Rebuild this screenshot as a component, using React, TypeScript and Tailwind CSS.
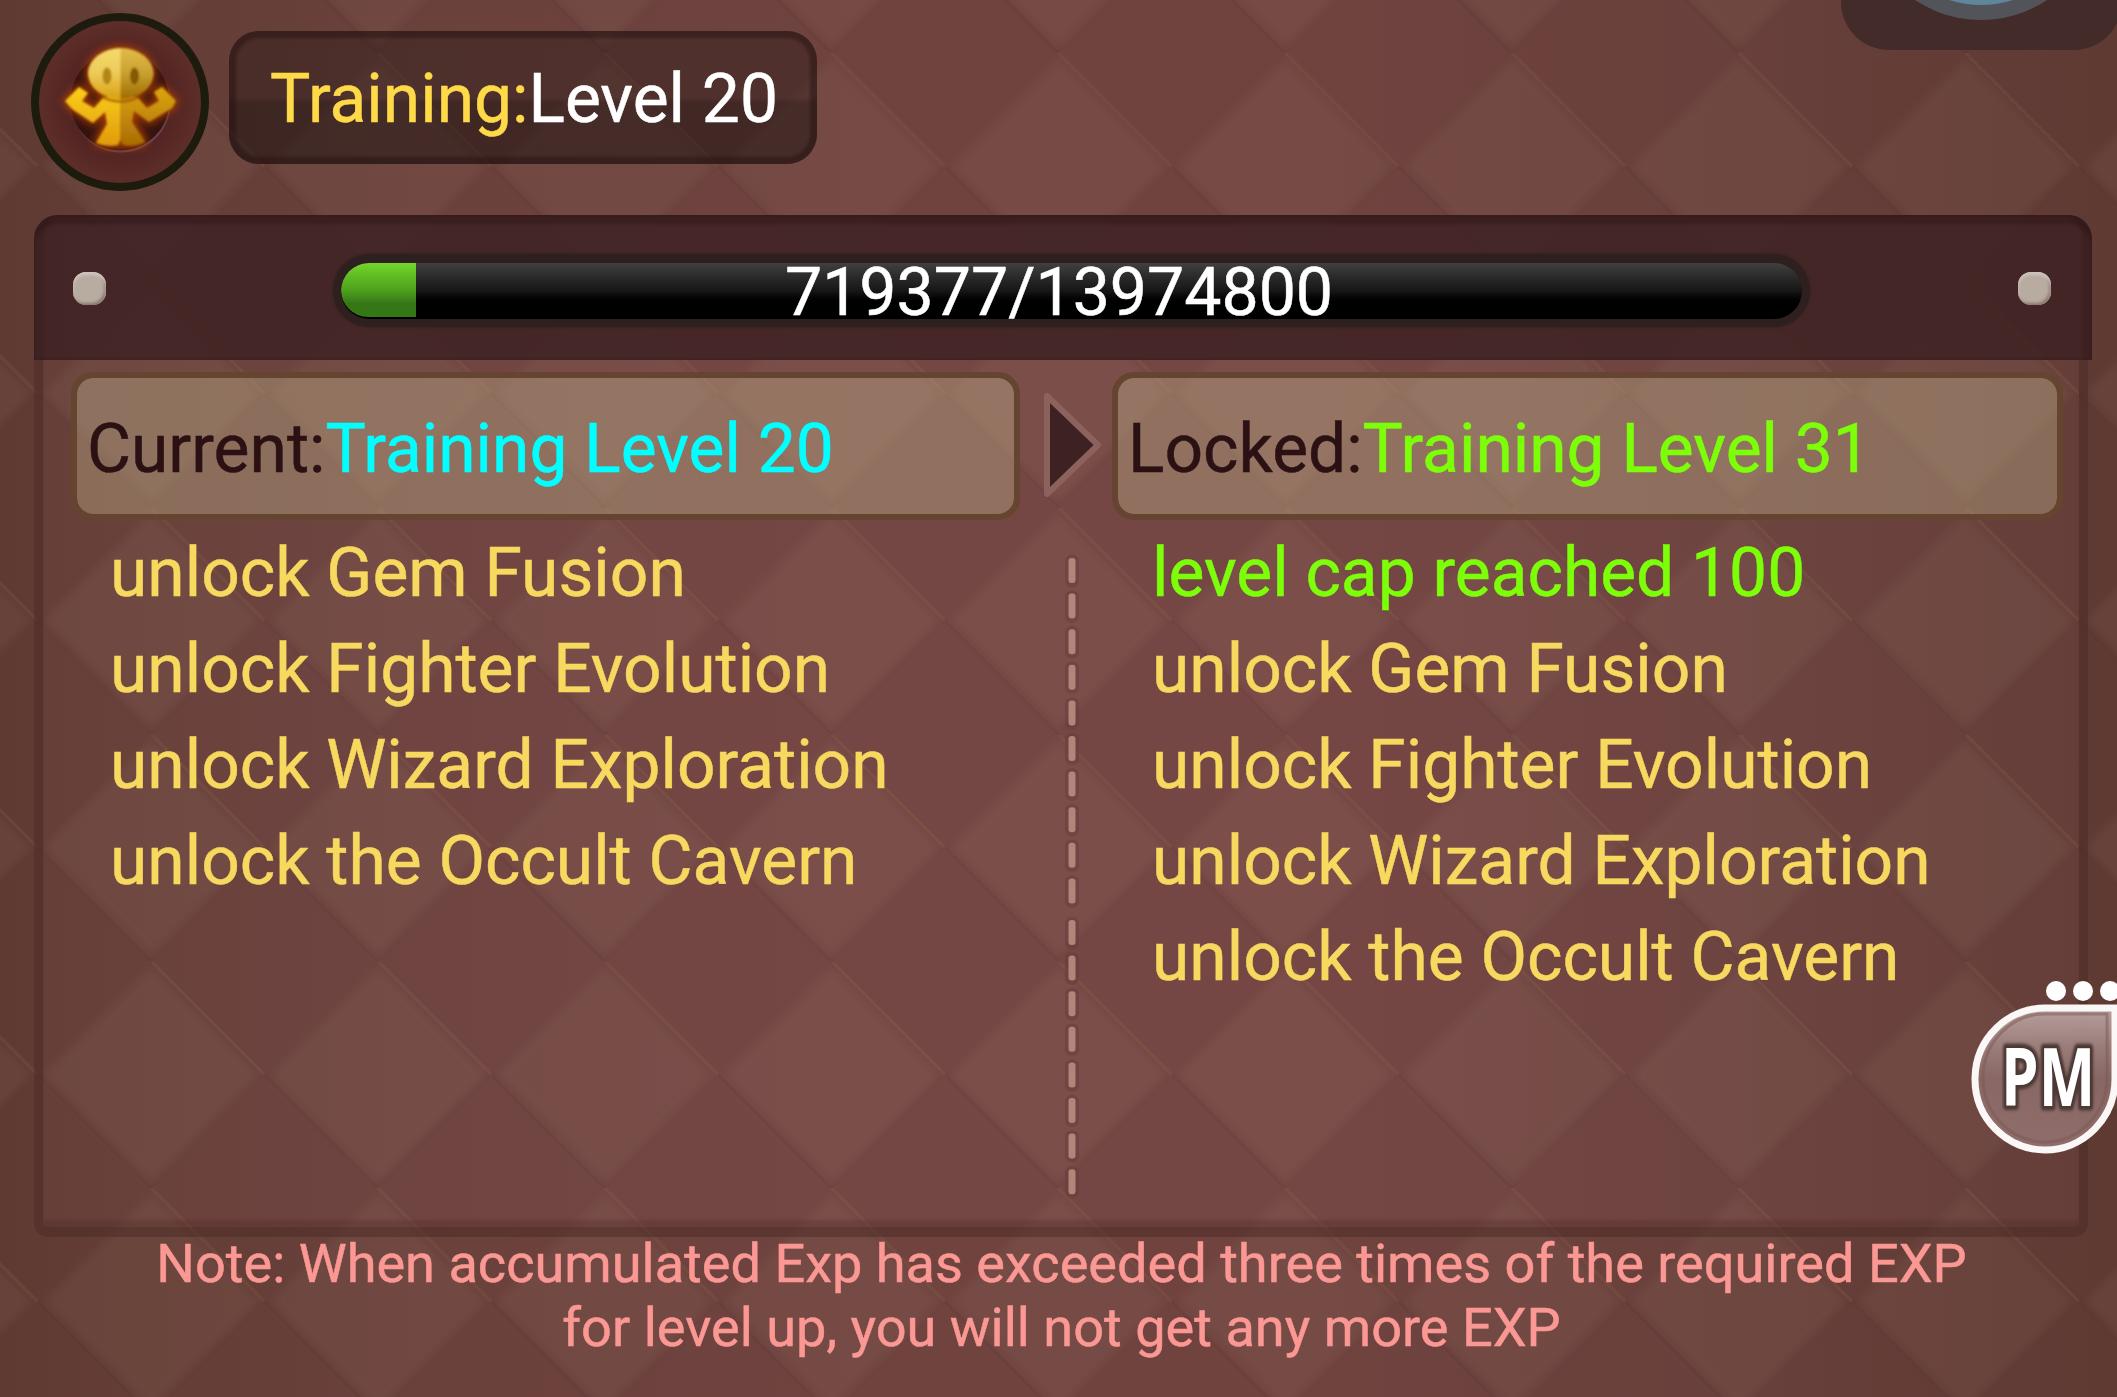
import React from 'react'

const CURRENT_UNLOCKS = [
  'unlock Gem Fusion',
  'unlock Fighter Evolution',
  'unlock Wizard Exploration',
  'unlock the Occult Cavern',
]

const exp = { value: 719377, max: 13974800 }

function Backdrop() {
  return (
    <svg className="absolute inset-0" width="2117" height="1397" viewBox="0 0 2117 1397">
      <defs>
        <linearGradient id="base" x1="0" x2="1" y1="0" y2="0">
          <stop offset="0" stopColor="#5f3a33" />
          <stop offset="0.06" stopColor="#633d36" />
          <stop offset="0.2" stopColor="#6b413c" />
          <stop offset="0.42" stopColor="#70433f" />
          <stop offset="0.62" stopColor="#70433f" />
          <stop offset="0.82" stopColor="#69403b" />
          <stop offset="0.95" stopColor="#613b35" />
          <stop offset="1" stopColor="#5f3a33" />
        </linearGradient>
        <filter id="soft" x="-10%" y="-10%" width="120%" height="120%">
          <feGaussianBlur stdDeviation="4" />
        </filter>
        <pattern id="argyle" patternUnits="userSpaceOnUse" x="37.7" y="53" width="226.8" height="227">
          <path d="M113.4 7 L220 113.5 L113.4 220 L7 113.5 Z" fill="#a88a78" fillOpacity="0.1" filter="url(#soft)" />
          <path d="M113.4 0 L226.8 113.5" stroke="#8a6444" strokeOpacity="0.22" strokeWidth="3" />
          <path d="M226.8 113.5 L113.4 227" stroke="#4a2b28" strokeOpacity="0.05" strokeWidth="3" />
          <path d="M0 113.5 L113.4 227" stroke="#4a2b28" strokeOpacity="0.14" strokeWidth="3" />
        </pattern>
      </defs>
      <rect width="2117" height="1397" fill="url(#base)" />
      <rect width="2117" height="1397" fill="url(#argyle)" />
    </svg>
  )
}

function FighterBadge() {
  return (
    <svg className="shrink-0" width="178" height="178" viewBox="31 13 178 178">
      <defs>
        <radialGradient id="badge">
          <stop offset="0.5" stopColor="#502220" />
          <stop offset="1" stopColor="#5e2f2a" />
        </radialGradient>
        <linearGradient id="headL" x1="0" x2="0" y1="0" y2="1">
          <stop offset="0" stopColor="#f4da6c" />
          <stop offset="0.5" stopColor="#eccb58" />
          <stop offset="1" stopColor="#d9a010" />
        </linearGradient>
        <linearGradient id="headR" x1="0" x2="0" y1="0" y2="1">
          <stop offset="0" stopColor="#e2bc48" />
          <stop offset="0.5" stopColor="#c8a030" />
          <stop offset="1" stopColor="#a06c00" />
        </linearGradient>
        <linearGradient id="bodyL" x1="0" x2="0" y1="0" y2="1">
          <stop offset="0" stopColor="#fbd015" />
          <stop offset="1" stopColor="#e09a10" />
        </linearGradient>
        <linearGradient id="bodyR" x1="0" x2="0" y1="0" y2="1">
          <stop offset="0" stopColor="#dca70e" />
          <stop offset="1" stopColor="#a96c05" />
        </linearGradient>
        <filter id="glow" x="-30%" y="-30%" width="160%" height="160%">
          <feGaussianBlur stdDeviation="4" />
        </filter>
        <filter id="edge">
          <feGaussianBlur stdDeviation="0.8" />
        </filter>
      </defs>
      <circle cx="120" cy="102" r="85" fill="url(#badge)" stroke="#1d1b0d" strokeWidth="8" />
      <circle cx="121" cy="103" r="49.500" fill="#67424f" />
      <circle cx="120" cy="101" r="49.500" fill="#35130f" />
      <g fill="#b84a06" stroke="#b84303" strokeWidth="4" filter="url(#glow)" opacity="0.9">
        <ellipse cx="120.500" cy="73.500" rx="32.500" ry="25.500" />
        <path d="M79 87L65 101L72 109L93 123L104 113L108 118L96 143Q108 148 120 145Q134 148 145 142L132 118L137 113L149 122L172 108L176 101L162 87L154 92L159 101L147 108L137 97L104 97L94 108L82 101L88 93Z" />
      </g>
      <g filter="url(#edge)">
        <path d="M79 87L65 101L72 109L93 123L105 112L107 124L96 143Q106 147 118 145L120 140L120 97L104 97L94 108L82 101L88 93Z" fill="url(#bodyL)" />
        <path d="M162 87L176 101L172 108L149 122L134 111L132 122L145 142Q134 147 124 145L120 140L120 97L137 97L147 108L159 101L154 92Z" fill="url(#bodyR)" />
        <path d="M103 96Q121 104 138 96L138 99Q121 107 103 99Z" fill="#a24c05" opacity="0.7" />
        <path d="M121 48A33 25.500 0 0 0 121 99Z" fill="url(#headL)" />
        <path d="M120.500 48A33 25.500 0 0 1 120.500 99Z" fill="url(#headR)" />
        <ellipse cx="107" cy="76" rx="4.500" ry="8.500" fill="#b38516" />
        <ellipse cx="134.500" cy="76" rx="4.500" ry="8.500" fill="#845a00" />
      </g>
    </svg>
  )
}

function Stud() {
  return <div className="h-[33px] w-[33px] rounded-[13px] bg-[#b8aca1] shadow-[inset_0_3px_3px_#d0c3c0,inset_-2px_-2px_3px_#8b7672]" />
}

function ExpBar() {
  return (
    <div className="relative mt-[5px] ml-[227px] mr-[208px] flex h-[73px] w-[1477px] items-center rounded-full bg-[#2e201e] px-[8px] shadow-[0_0_3px_#2e201e]">
      <div className="h-[56px] w-full overflow-hidden rounded-full bg-gradient-to-b from-[#404040] via-[#151615] to-black to-80%">
        <div
          className="h-[54px] rounded-l-full bg-gradient-to-b from-[#73d62a] via-[#4ea11d] to-[#357717] to-75%"
          style={{ width: `${(exp.value / exp.max) * 100}%` }}
        />
      </div>
      <span className="absolute inset-x-0 pt-[4px] pr-[25px] text-center text-[66.2px] leading-[73px] text-white">
        {exp.value}/{exp.max}
      </span>
    </div>
  )
}

interface LevelTagProps {
  label: string
  level: string
  color: string
}

function LevelTag({ label, level, color }: LevelTagProps) {
  return (
    <div className="h-[148px] rounded-[22px] border-[6px] border-[#65452f] bg-[#beae8a]/40 bg-clip-padding pl-[10px] leading-[142px] whitespace-nowrap">
      <span className="text-[#2b1113]">{label}</span>
      <span className={color}>{level}</span>
    </div>
  )
}

function Divider() {
  // two runs of stitches, with a slightly wider gap between them
  const dashes = Array.from({ length: 18 }, (_, i) => (i < 10 ? i * 35.6 : 362 + (i - 10) * 35.6))
  return (
    <svg width="24" height="650" viewBox="0 -6 24 650">
      {dashes.map((y) => (
        <g key={y}>
          <rect x="5" y={y - 3} width="14" height="32" rx="6" fill="#5b3735" opacity="0.35" />
          <rect x="8.500" y={y} width="7" height="25" rx="3" fill="#b0867a" />
        </g>
      ))}
    </svg>
  )
}

function PmButton() {
  return (
    <svg className="absolute left-[1965px] top-[975px]" width="152" height="185" viewBox="1965 975 152 185">
      <defs>
        <linearGradient id="pm" x1="0" x2="0" y1="0" y2="1">
          <stop offset="0" stopColor="#c0aba9" />
          <stop offset="0.3" stopColor="#9d807d" />
          <stop offset="0.5" stopColor="#8b6b68" />
          <stop offset="1" stopColor="#947370" />
        </linearGradient>
        <filter id="pmShade" x="-20%" y="-20%" width="140%" height="140%">
          <feGaussianBlur stdDeviation="1.500" />
        </filter>
      </defs>
      <circle cx="2056" cy="991" r="10" fill="#fff" />
      <circle cx="2083" cy="991" r="10" fill="#fff" />
      <circle cx="2110" cy="991" r="10" fill="#fff" />
      <path d="M2046 1008H2114V1078A70 71 0 1 1 2046 1008Z" transform="translate(1 0)" fill="url(#pm)" fillOpacity="0.9" stroke="#fbf7f6" strokeWidth="7" />
      <path d="M2046 1014H2107V1078A62 64 0 1 1 2046 1014Z" fill="none" stroke="#7b5754" strokeOpacity="0.5" strokeWidth="3" />
      <g transform="translate(2001 1106) scale(0.74 1)" fontFamily="'Open Sans', 'Noto Sans', sans-serif" fontWeight="700" fontSize="81">
        <text fill="#4b3835" stroke="#4b3835" strokeWidth="9" strokeLinejoin="round" filter="url(#pmShade)">
          PM
        </text>
        <text fill="#fff" stroke="none">
          PM
        </text>
      </g>
    </svg>
  )
}

function CornerWidget() {
  return (
    <div className="absolute left-[1841px] top-[-100px] h-[150px] w-[281px] overflow-hidden rounded-[48px] bg-[#432b29]">
      <div className="absolute left-[21px] top-[-118px] h-[238px] w-[238px] rounded-full border-[15px] border-[#53535a] bg-[#5f869a]" />
    </div>
  )
}

export default function App() {
  return (
    <div className="relative h-[1397px] w-[2117px] overflow-hidden bg-[#6f423e] font-['Roboto',sans-serif] text-[67.7px] [-webkit-text-stroke:0.5px]">
      <Backdrop />

      <div className="relative flex h-full flex-col">
        <header className="flex h-[215px] items-start pl-[31px] pt-[13px]">
          <FighterBadge />
          <div className="ml-[20px] mt-[18px] h-[133px] w-[588px] rounded-[30px] bg-gradient-to-b from-black/28 from-50% to-black/40 to-54% pl-[41px] leading-[137px] whitespace-nowrap shadow-[inset_0_0_3px_7px_rgba(35,15,15,0.45)]">
            <span className="text-[#ffda48]">Training:</span>
            <span className="text-white">Level 20</span>
          </div>
        </header>

        <section className="ml-[34px] flex h-[1022px] w-[2058px] flex-col">
          <div className="flex h-[145px] shrink-0 items-center rounded-t-[24px] bg-[#412325]/90 pl-[39px] pt-[1px] shadow-[inset_0_9px_3px_rgba(40,18,20,0.35),inset_9px_0_3px_rgba(40,18,20,0.2),inset_-9px_0_3px_rgba(40,18,20,0.25)]">
            <Stud />
            <ExpBar />
            <Stud />
          </div>

          <div className="flex h-[877px] w-[2054px] rounded-b-[14px] border-x-[9px] border-b-[10px] border-[#4b2a24]/50 bg-[#ffb0c0]/4 bg-clip-padding pl-[28px] pt-[12px] shadow-[inset_0_-7px_3px_rgba(80,40,38,0.3)]">
            <div className="w-[949px] shrink-0">
              <LevelTag label="Current:" level="Training Level 20" color="text-[#00ffff]" />
              <ul className="pl-[39px] pt-[5px] leading-[96px] text-[#f8d95f] whitespace-nowrap">
                {CURRENT_UNLOCKS.map((u) => (
                  <li key={u}>{u}</li>
                ))}
              </ul>
            </div>

            <div className="flex w-[92px] shrink-0 flex-col items-center">
              <svg className="mt-[15px] ml-[14px]" width="68" height="116" viewBox="1039 388 68 116">
                <path d="M1047 397L1098 446L1047 495Z" fill="#3e2122" stroke="#8b625c" strokeWidth="6" strokeLinejoin="round" />
              </svg>
              <div className="ml-[12px] mt-[49px]">
                <Divider />
              </div>
            </div>

            <div className="w-[951px] shrink-0">
              <LevelTag label="Locked:" level="Training Level 31" color="text-[#7cff08]" />
              <ul className="pl-[40px] pt-[5px] leading-[96px] text-[#f8d95f] whitespace-nowrap">
                <li className="text-[#7cff08]">level cap reached 100</li>
                {CURRENT_UNLOCKS.map((u) => (
                  <li key={u}>{u}</li>
                ))}
              </ul>
            </div>
          </div>
        </section>

        <p className="-mt-[5px] pl-[6px] text-center text-[54.1px] leading-[64px] whitespace-nowrap text-[#fb9894]">
          Note: When accumulated Exp has exceeded three times of the required EXP
          <br />
          for level up, you will not get any more EXP
        </p>
      </div>

      <CornerWidget />
      <PmButton />
    </div>
  )
}
